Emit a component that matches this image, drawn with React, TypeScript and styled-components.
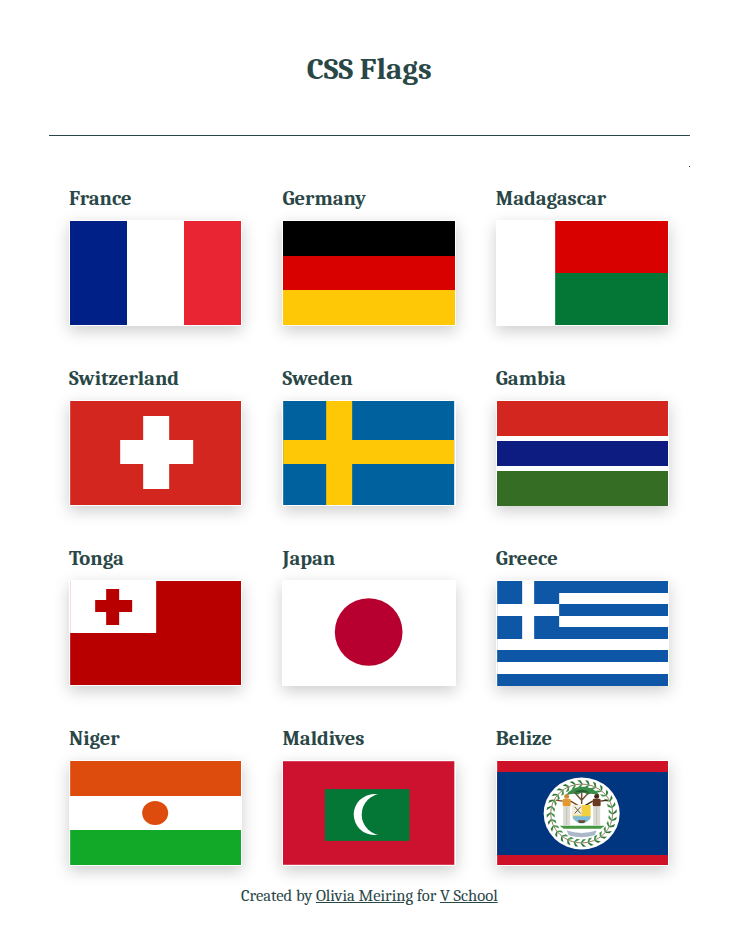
import styled, { createGlobalStyle } from 'styled-components'

const ink = '#2a4747'

const GlobalStyle = createGlobalStyle`
  html, body {
    margin: 0;
    background: #fff;
  }
  body {
    font-family: Cambria, "Liberation Serif", serif;
    color: ${ink};
  }
`

const Page = styled.div`
  width: 640.5px;
  margin-left: 49.1px;
`

const Header = styled.header`
  height: 135px;
  border-bottom: 1px solid ${ink};
`

const Title = styled.h1`
  margin: 0;
  padding-top: 50px;
  font-size: 31px;
  line-height: 38px;
  font-weight: 700;
  text-align: center;
`

const Speck = styled.div`
  width: 1px;
  height: 1px;
  margin: 30px 0 0 auto;
  background: ${ink};
`

const Grid = styled.main`
  display: grid;
  grid-template-columns: repeat(3, 213.33px);
  grid-auto-rows: 180px;
  margin-top: 20px;
`

const Cell = styled.section`
  padding: 0 20px;
`

const Name = styled.h2`
  margin: 0 0 11px;
  font-size: 20.6px;
  line-height: 22px;
  font-weight: 700;
`

const Flag = styled.div`
  height: 104px;
  border: 1px solid #fff;
  background: #fff;
  box-shadow: 0 5px 15px rgba(0, 0, 0, 0.2);
`

const Columns = styled.div`
  display: grid;
  grid-template-columns: 57px 57px 1fr;
  height: 100%;
`

const Rows = styled.div<{ $rows: string }>`
  display: grid;
  grid-template-rows: ${(p) => p.$rows};
  height: 100%;
`

const Band = styled.div<{ $c: string }>`
  background: ${(p) => p.$c};
`

const Art = styled.svg<{ $tall?: boolean }>`
  display: block;
  width: 100%;
  height: ${(p) => (p.$tall ? '105px' : '100%')};
`

const Footer = styled.footer`
  margin-top: -21px;
  font-size: 16.6px;
  line-height: 20px;
  text-align: center;

  a {
    color: ${ink};
    text-decoration: underline;
  }
`

const Belize = () => {
  const leaves = Array.from({ length: 28 }, (_, i) => (i * 360) / 28)
  return (
    <Art viewBox="0 0 171 104">
      <rect width="171" height="104" fill="#ce1126" />
      <rect y="11" width="171" height="83" fill="#003580" />
      <g transform="translate(84.5 52.5) scale(1 0.95)">
        <circle r="38" fill="#fff" />
        <circle r="31" fill="none" stroke="#8a6a4a" strokeWidth="0.9" />
        {leaves.map((a) => (
          <g key={a} transform={`rotate(${a})`}>
            <path d="M0 -31 L-4.5 -35 L-1.2 -35 L1 -31.6z" fill="#2d7a38" />
            <path d="M0 -31 L-4.5 -27 L-1.2 -27 L1 -30.4z" fill="#3f9148" />
          </g>
        ))}
        <path d="M-16 -19 q6 -9 15 -9 q12 -1 19 9 q-8 -3 -12 -1 q-6 -4 -9 0 q-6 -2 -13 1z" fill="#3a8a48" />
        <path d="M-8 -22 q8 -6 16 0 q-8 -1 -16 0z" fill="#1f5f30" />
        <path d="M0 -10 V-23 M0 -14 L-7 -22 M0 -14 L7 -22" stroke="#6b5236" strokeWidth="1.5" fill="none" />
        <circle cx="-15" cy="-18" r="2.5" fill="#c98a3a" />
        <rect x="-19" y="-15.5" width="8" height="8" rx="1.5" fill="#e39a2c" />
        <path d="M-26 -14 L-19 -13 M-11 -13 L-3 -8" stroke="#7a4a24" strokeWidth="1.4" />
        <rect x="-18.5" y="-7.5" width="7" height="20" fill="#dcdcd4" />
        <path d="M-15 -7 V12" stroke="#b7b7ae" strokeWidth="0.7" />
        <circle cx="15" cy="-18" r="2.5" fill="#4a2814" />
        <rect x="11" y="-15.5" width="8" height="8" rx="1.5" fill="#6a3a20" />
        <path d="M19 -13 L26 -14 M11 -13 L3 -8" stroke="#4a2814" strokeWidth="1.4" />
        <rect x="11.5" y="-7.5" width="7" height="20" fill="#dcdcd4" />
        <path d="M15 -7 V12" stroke="#b7b7ae" strokeWidth="0.7" />
        <path d="M-9 -9 H9 V5 Q0 15 -9 5z" fill="#f2cf3f" />
        <path d="M-9 -9 H0 V2 H-9z" fill="#efeee2" />
        <path d="M-7 -7 L-1 0 M-1 -7 L-7 0" stroke="#6b5236" strokeWidth="1" />
        <path d="M-9 3 H9 L8 6 Q0 15 -8 6z" fill="#7ebbdd" />
        <path d="M-4 7 H4 L2.5 10 H-2.5z" fill="#6a4a30" />
        <path d="M-22 13 H23 L19 16 H-18z" fill="#46973f" />
        <path d="M-15 18 Q0 23 15 18 L13 23 Q0 27 -13 23z" fill="#aab8c8" />
      </g>
    </Art>
  )
}

const flags = [
  {
    name: 'France',
    art: (
      <Columns>
        <Band $c="#002088" />
        <Band $c="#fff" />
        <Band $c="#ea2533" />
      </Columns>
    ),
  },
  {
    name: 'Germany',
    art: (
      <Rows $rows="35px 34px 35px">
        <Band $c="#000" />
        <Band $c="#d90000" />
        <Band $c="#ffc807" />
      </Rows>
    ),
  },
  {
    name: 'Madagascar',
    art: (
      <Art viewBox="0 0 171 104">
        <rect x="58" width="113" height="52" fill="#d90000" />
        <rect x="58" y="52" width="113" height="52" fill="#047736" />
      </Art>
    ),
  },
  {
    name: 'Switzerland',
    art: (
      <Art viewBox="0 0 171 104">
        <rect width="171" height="104" fill="#d3261e" />
        <path d="M73 15h26v24h24v24H99v25H73V63H50V39h23z" fill="#fff" />
      </Art>
    ),
  },
  {
    name: 'Sweden',
    art: (
      <Art viewBox="0 0 171 104">
        <rect width="171" height="104" fill="#00619f" />
        <rect x="43" width="26" height="104" fill="#ffc807" />
        <rect y="39" width="171" height="24" fill="#ffc807" />
      </Art>
    ),
  },
  {
    name: 'Gambia',
    art: (
      <Rows $rows="35px 5px 25px 5px 35px">
        <Band $c="#d3261e" />
        <Band $c="#fff" />
        <Band $c="#0c1c80" />
        <Band $c="#fff" />
        <Band $c="#366d24" />
      </Rows>
    ),
  },
  {
    name: 'Tonga',
    art: (
      <Art viewBox="0 0 171 104">
        <rect width="171" height="104" fill="#b90000" />
        <rect width="86" height="52" fill="#fff" />
        <path d="M36 8h13v11h13v12H49v13H36V31H25V19h11z" fill="#b90000" />
      </Art>
    ),
  },
  {
    name: 'Japan',
    art: (
      <Art viewBox="0 0 172 104">
        <circle cx="86" cy="51" r="34" fill="#b70030" />
      </Art>
    ),
  },
  {
    name: 'Greece',
    art: (
      <Art $tall viewBox="0 0 171 105">
        <rect width="171" height="105" fill="#0d57a6" />
        <rect x="62" y="12" width="109" height="11" fill="#fff" />
        <rect x="62" y="35" width="109" height="11" fill="#fff" />
        <rect y="58" width="171" height="11" fill="#fff" />
        <rect y="81" width="171" height="12" fill="#fff" />
        <rect x="25" width="12" height="58" fill="#fff" />
        <rect y="23" width="62" height="12" fill="#fff" />
      </Art>
    ),
  },
  {
    name: 'Niger',
    art: (
      <Art viewBox="0 0 171 104">
        <rect width="171" height="35" fill="#dd4b0d" />
        <rect y="69" width="171" height="35" fill="#12a828" />
        <ellipse cx="85" cy="52" rx="13" ry="12" fill="#dd4b0d" />
      </Art>
    ),
  },
  {
    name: 'Maldives',
    art: (
      <Art viewBox="0 0 172 104">
        <rect width="172" height="104" fill="#cd1230" />
        <rect x="42" y="28" width="85" height="52" fill="#047736" />
        <circle cx="91.5" cy="53.5" r="20.5" fill="#fff" />
        <circle cx="100" cy="53.5" r="21" fill="#047736" />
      </Art>
    ),
  },
  { name: 'Belize', art: <Belize /> },
]

const App = () => {
  return (
    <>
      <GlobalStyle />
      <Page>
        <Header>
          <Title>CSS Flags</Title>
        </Header>
        <Speck />
        <Grid>
          {flags.map((flag) => (
            <Cell key={flag.name}>
              <Name>{flag.name}</Name>
              <Flag>{flag.art}</Flag>
            </Cell>
          ))}
        </Grid>
        <Footer>
          Created by <a href="#olivia">Olivia Meiring</a> for <a href="#vschool">V School</a>
        </Footer>
      </Page>
    </>
  )
}

export default App
